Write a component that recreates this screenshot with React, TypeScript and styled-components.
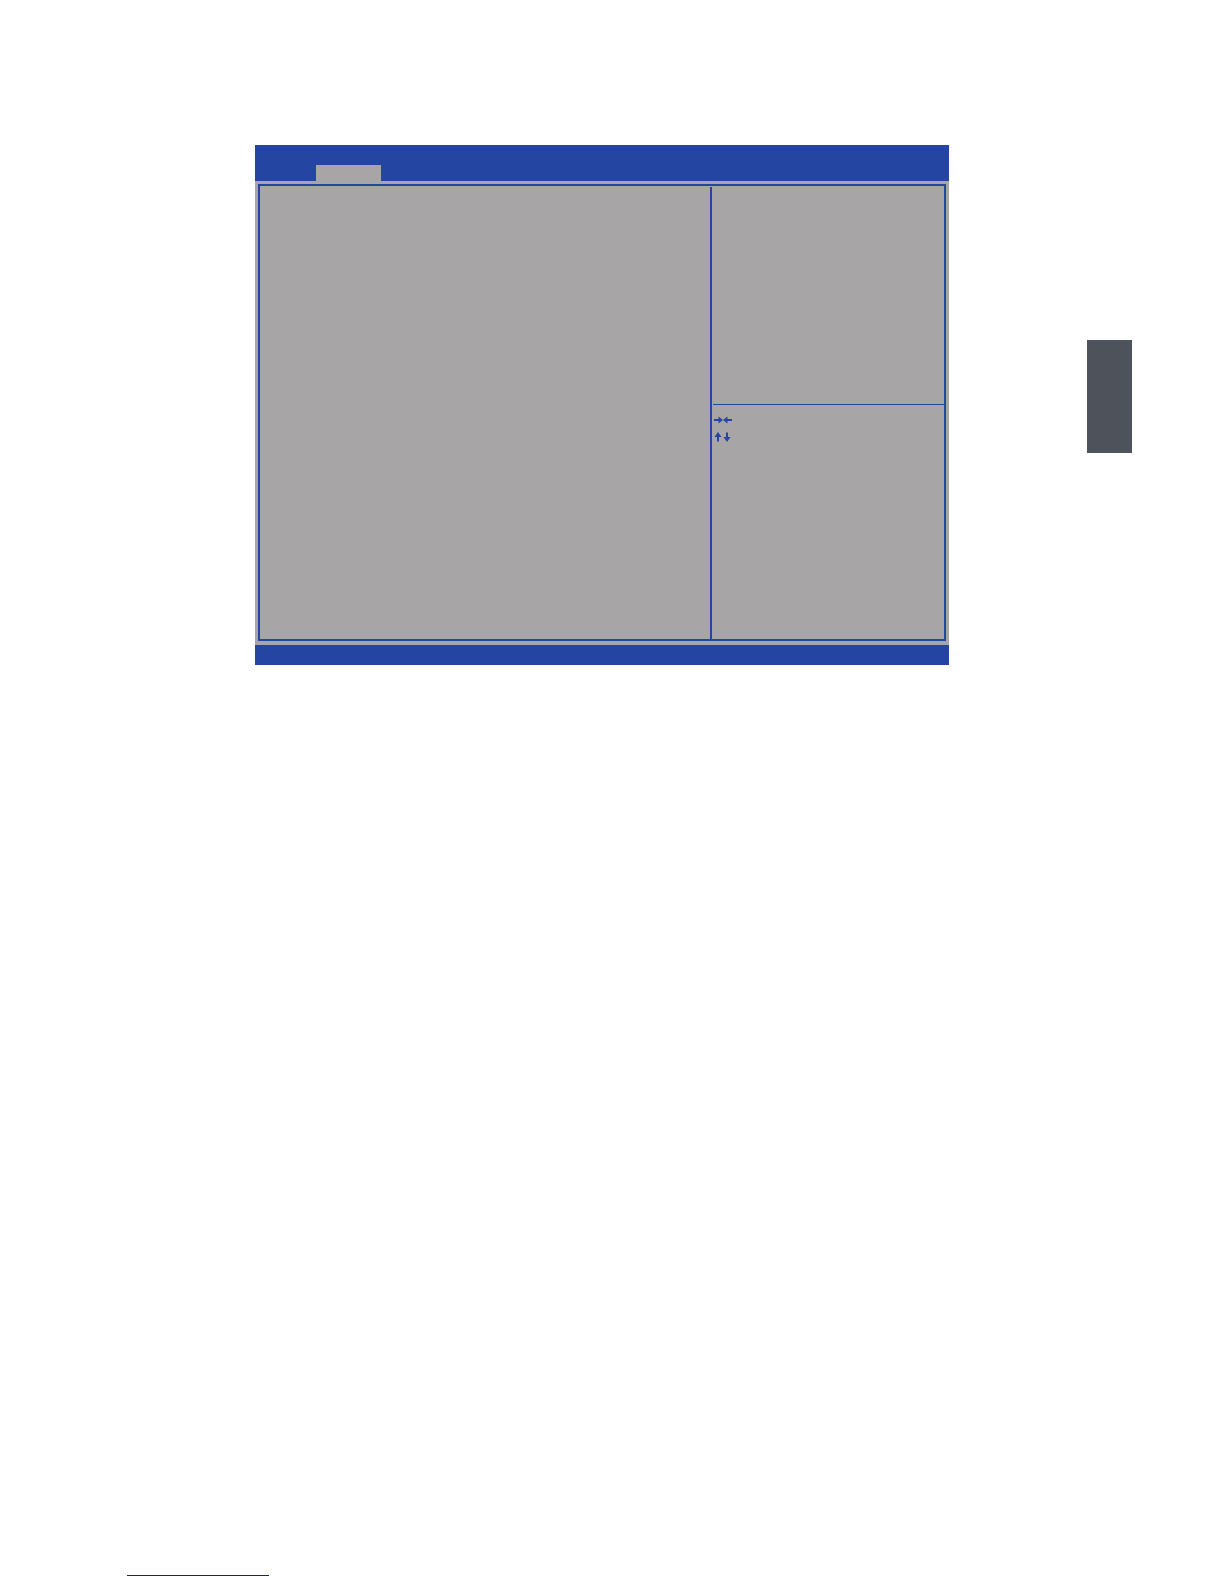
import React from "react";
import styled, { createGlobalStyle } from "styled-components";

const blue = "#2446a2";
const grey = "#a7a5a6";

const GlobalStyle = createGlobalStyle`
  *, *::before, *::after { box-sizing: border-box; }
  body {
    margin: 0;
    background: #fff;
    font-family: "Liberation Sans", Arial, sans-serif;
  }
`;

const Page = styled.div`
  min-height: 100vh;
  display: flex;
  flex-direction: column;
  justify-content: space-between;
  padding: 145px 92px 8px 127px;
`;

const Content = styled.main`
  display: flex;
  align-items: flex-start;
  gap: 138px;
  padding-left: 128px;
`;

const SetupWindow = styled.section`
  flex: 1;
  min-width: 0;
  background: ${grey};
`;

const MenuBar = styled.header`
  display: flex;
  align-items: flex-end;
  height: 36px;
  padding-left: 61px;
  background: ${blue};
`;

const ActiveTab = styled.button`
  width: 65px;
  height: 16px;
  padding: 0;
  border: 0;
  background: ${grey};
`;

const Frame = styled.div`
  display: flex;
  min-height: 457px;
  margin: 3px 3px 4px;
  border: 2px solid ${blue};
`;

const Settings = styled.div`
  flex: 1;
`;

const SidePanel = styled.aside`
  display: flex;
  flex-direction: column;
  flex: 0 0 234px;
  margin-top: 1px;
  border-left: 2px solid ${blue};
  padding-left: 1px;
`;

const ItemHelp = styled.div`
  min-height: 218px;
  border-bottom: 1px solid ${blue};
`;

const KeyHelp = styled.div`
  display: flex;
  flex-direction: column;
  align-items: flex-start;
  gap: 6px;
  padding: 10px 1px;
`;

const KeyIcon = styled.svg`
  display: block;
  width: 19px;
  height: 11px;
  fill: ${blue};
`;

const StatusBar = styled.footer`
  height: 20px;
  background: ${blue};
`;

const ChapterMarker = styled.aside`
  flex: 0 0 45px;
  height: 113px;
  margin-top: 195px;
  background: #4e525b;
`;

const FootLink = styled.a`
  width: 142px;
  border-bottom: 1px solid #1a1aa6;
`;

export default function App() {
  return (
    <>
      <GlobalStyle />
      <Page>
        <Content>
          <SetupWindow aria-label="Setup">
            <MenuBar>
              <ActiveTab type="button" aria-label="Active tab" />
            </MenuBar>
            <Frame>
              <Settings />
              <SidePanel>
                <ItemHelp />
                <KeyHelp>
                  <KeyIcon viewBox="0 0 19 11" role="img" aria-label="Right and left keys">
                    <path d="M0 4H4.5V1.5L9 5 4.5 8.5V6H0z" />
                    <path d="M18 4H13.5V1.5L9 5 13.5 8.5V6H18z" />
                  </KeyIcon>
                  <KeyIcon viewBox="0 0 19 11" role="img" aria-label="Up and down keys">
                    <path d="M4 0L7.5 5H5V9.5H3V5H.5z" />
                    <path d="M12 .5H14V5H16.5L13 10 9.5 5H12z" />
                  </KeyIcon>
                </KeyHelp>
              </SidePanel>
            </Frame>
            <StatusBar />
          </SetupWindow>
          <ChapterMarker />
        </Content>
        <FootLink href="#" aria-label="Footer link" />
      </Page>
    </>
  );
}
